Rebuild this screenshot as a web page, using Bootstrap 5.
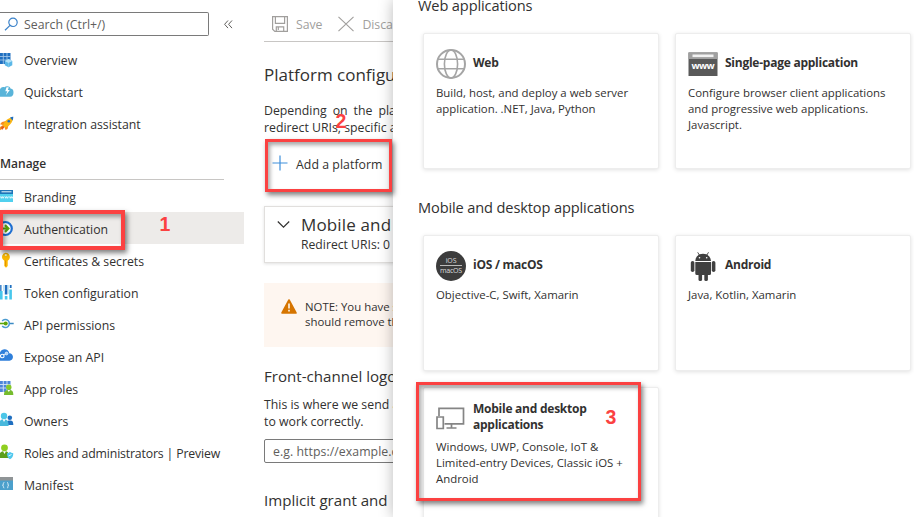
<!DOCTYPE html>
<html lang="en">
<head>
<meta charset="utf-8">
<title>Authentication</title>
<link href="https://cdn.jsdelivr.net/npm/bootstrap@5.3.0/dist/css/bootstrap.min.css" rel="stylesheet">
<style>
body{font-family:"Open Sans","Noto Sans",sans-serif;font-size:12.3px;line-height:16px;color:#323130;background:#fff;width:914px;height:517px}
svg{display:block;flex:none;overflow:visible}
.side{width:244px;flex:none}
.search-row{padding-top:12px;height:44px}
.search-box{width:209px;height:24px;border:1px solid #7a7a7a;border-left:0;border-radius:0 2px 2px 0;color:#605e5c;padding-left:4px;gap:5px}
.search-box span{padding-top:1px}
.collapse-icon{margin-left:15px}
.menu-item{height:32px;gap:10px;letter-spacing:-.02px}
.menu-item span{padding-top:2px}
.group-title ~ .menu-item span{padding-top:4px}
.menu-item.long{letter-spacing:-.16px}
.menu-item.current{background:#edebe9}
.group-title{height:40px;width:224px;border-bottom:1px solid #c8c6c4;font-weight:600;padding-top:16px;font-size:12px}
.main{width:149px;padding-left:20px;flex:none}
.tools{height:42px;padding:6px 0 0 8px;border-bottom:1px solid #c8c6c4;color:#a19f9d;gap:8px}
.tools span{padding-top:2px;letter-spacing:-.05px}
.h-big{font-size:17px;line-height:24px}
.page-title{padding-top:21px}
.h-mid{font-size:14.6px;line-height:20px;letter-spacing:-.13px}
.para{line-height:17px}
.intro{margin-top:15px}
.spread{word-spacing:2.8px}
.add{height:49px;padding:4px 0 0 8px;gap:8px;margin-top:2px;letter-spacing:.05px}
.config{height:57px;border:1px solid #e1dfdd;box-shadow:0 1px 3px rgba(0,0,0,.12);padding:6px 0 0 12px;gap:11px;margin-top:19px;width:200px}
.config .h-big{letter-spacing:.15px}
.config-sub{line-height:16px;font-size:12.2px}
.note{margin-top:20px;height:64px;width:200px;background:#fef6f0;padding:16px 0 0 17px;gap:8px;font-size:11.4px;line-height:15px}
.front-title{margin-top:19px}
.front-text{margin-top:10px}
.url{margin-top:9px;height:24px;width:200px;border:1px solid #7a7a7a;border-radius:2px;padding:2px 0 0 8px;color:#605e5c;letter-spacing:.05px}
.implicit-title{margin-top:27px}
.front-title,.implicit-title{font-size:15.1px;letter-spacing:0}
.panel{background:#fff;box-shadow:0 0 14px rgba(0,0,0,.28);padding-left:25px}
.web-title{margin-top:-5px}
.web-tiles{margin-top:18px}
.mobile-title{margin:28px 0 18px}
.tiles{display:grid;grid-template-columns:236px 236px;gap:16px;padding-left:5px}
.tile{height:136px;border:1px solid #ededed;border-radius:2px;box-shadow:0 1px 4px rgba(0,0,0,.12);padding:14px 12px 0 12px;font-size:11.42px;background:#fff}
.tile-head{height:32px;gap:7px;font-weight:700;font-size:12px;letter-spacing:-.25px;margin-bottom:5px}
.tile-head span{margin-top:-2px}
.mark-box{position:absolute;border:4px solid #fb4141;box-shadow:2px 3px 5px rgba(0,0,0,.5),inset 2px 3px 4px rgba(0,0,0,.35)}
.mark-num{position:absolute;font:bold 19.5px/20px "Liberation Sans",sans-serif;color:#fb4141;width:12px;text-align:center}
.mb1{left:-1px;top:210px;width:126px;height:40px}
.mb2{left:265px;top:139px;width:127px;height:53px;border-width:3px}
.mb3{left:416px;top:382px;width:225px;height:119px;border-width:3px}
.mn1{left:159px;top:214px}.mn2{left:335px;top:111px}.mn3{left:605px;top:407px}
</style>
<script src="https://cdn.jsdelivr.net/npm/bootstrap@5.3.0/dist/js/bootstrap.bundle.min.js"></script>
</head>
<body class="position-relative overflow-hidden text-nowrap">
<div class="d-flex h-100">
<nav class="side">
  <div class="search-row d-flex">
    <div class="search-box d-flex align-items-center">
      <svg width="15" height="15" viewBox="0 0 15 15" fill="none" stroke="#3b82c9" stroke-width="1.2"><circle cx="9" cy="5.3" r="4.2"/><path d="M6 8.4L1 13.2"/></svg>
      <span>Search (Ctrl+/)</span>
    </div>
    <svg class="collapse-icon mt-2" width="9" height="9" viewBox="0 0 9 9" fill="none" stroke="#605e5c"><path d="M4 .5L.6 4.3 4 8.1M8 .5L4.6 4.3 8 8.1"/></svg>
  </div>
  <div class="menu-item d-flex align-items-center"><svg width="14" height="16" viewBox="0 0 14 16"><path fill="#1f6fc0" d="M0 1h10.500v11H0z"/><path d="M0 4.500h10.500M0 8h10.500M3.300 1v11M7 1v11" stroke="#a9cbea" stroke-width=".8"/><path d="M8.500 7L12.300 9v4.200L8.500 15.300 4.800 13.200V9z" fill="#5bb8e8"/><path d="M8.500 7L12.300 9 8.500 11 4.800 9z" fill="#b5e2f7"/><path d="M8.500 11v4.300" stroke="#8fd0ef" stroke-width=".6"/></svg><span>Overview</span></div>
  <div class="menu-item d-flex align-items-center"><svg width="14" height="16" viewBox="0 0 14 16"><path fill="#59b4d9" d="M0 5.500C.5 3.500 2.500 2.300 4.500 3.300 6 1.500 10 2 10.500 4.500c2.500.3 3 2 3 4C13.500 11 12.500 12.800 10 12.800H0z"/><path fill="#fff" d="M6.500 3.200L5.300 7.300h2l-1.500 4 4-5.200H7.800l1-2.900z"/></svg><span>Quickstart</span></div>
  <div class="menu-item d-flex align-items-center"><svg width="14" height="16" viewBox="0 0 14 16"><path d="M2 6L6 5 8.500 9 7.500 13 5.500 14 4.500 11 1 13.500 0 14.200V11L3 9 0 8.300z" fill="#f78d1e"/><path d="M3 9.500C4 6 7 2.500 11.500 1.500L13 3.500C11.500 8 8.500 10.500 5.500 11.800z" fill="#fdb713"/><path d="M10 1.400C11.500.7 12.500.6 13.300.7c0 1-.2 2.500-.8 3.700z" fill="#1f6fc0"/><circle cx="8.800" cy="5.300" r="1.300" fill="#1f6fc0"/><path d="M1 11.500l2-1.500 1.300 1.500L2 14z" fill="#e3591b"/></svg><span>Integration assistant</span></div>
  <div class="group-title">Manage</div>
  <div class="menu-item d-flex align-items-center"><svg width="14" height="16" viewBox="0 0 14 16"><path fill="#50d0ee" d="M0 2h13v12H0z"/><path fill="#1f75b8" d="M0 2h13v4H0z"/><path fill="#e8f5fb" d="M1.500 3.300h10v1H1.500z"/><path d="M.5 8.500l.8 1.800.9-1.800.9 1.800.9-1.800m1 0l.8 1.800.9-1.800.9 1.800.9-1.800m1 0l.8 1.800.9-1.800.9 1.800.9-1.800" fill="none" stroke="#fff" stroke-width=".8"/></svg><span>Branding</span></div>
  <div class="menu-item current d-flex align-items-center"><svg width="14" height="16" viewBox="0 0 14 16"><circle cx="5.300" cy="8.500" r="6.500" fill="#fff" stroke="#1f6fd0" stroke-width="2.200"/><path d="M0 8.500h8M5 5.100L8.400 8.500 5 11.900" fill="none" stroke="#5ea50a" stroke-width="2.200"/></svg><span>Authentication</span></div>
  <div class="menu-item d-flex align-items-center"><svg width="14" height="16" viewBox="0 0 14 16"><path d="M5.500.8a4.300 4.300 0 0 1 2.200 8V14L6 15.800 4.300 14V8.800A4.300 4.300 0 0 1 5.500.8z" fill="#fbb800"/><circle cx="5.800" cy="3" r="1.100" fill="#fff3c0"/><path d="M5.500 8.500v5.500" stroke="#e18a00" stroke-width=".8"/></svg><span>Certificates &amp; secrets</span></div>
  <div class="menu-item d-flex align-items-center"><svg width="14" height="16" viewBox="0 0 14 16"><path fill="#1f6fc0" d="M.2 1h1.300v8H.2zM4.800 1h2.600v9.500H4.800zM9.800 1h1.800v3H9.800z"/><path fill="#48c7ec" d="M0 7h2.600v8.500H0zM4.800 12h2.600v3.500H4.800zM9.300 5.500h2.600v10H9.300z"/><path d="M3.600 1v6M8.400 1v9" stroke="#9bd9f2" stroke-width=".7"/></svg><span>Token configuration</span></div>
  <div class="menu-item d-flex align-items-center"><svg width="14" height="16" viewBox="0 0 14 16"><path d="M2.200 5A4 4 0 1 1 2.200 10" fill="none" stroke="#4b9bd0" stroke-width="1.500"/><path d="M9.700 7.500h4" stroke="#3b8bc4" stroke-width="1.500"/><path d="M0 7.500h5" stroke="#5ea50a" stroke-width="1.600"/><circle cx="5.700" cy="7.500" r="2" fill="#5ea50a"/></svg><span>API permissions</span></div>
  <div class="menu-item d-flex align-items-center"><svg width="14" height="16" viewBox="0 0 14 16"><path fill="#2f7fda" d="M0 4.500C2-.3 8.500.5 9.300 5.300c5 .2 4.800 7.200.2 7.500H0z"/><circle cx="2.300" cy="8" r="1.800" fill="none" stroke="#fff" stroke-width="1.100"/><circle cx="6.500" cy="5.500" r="1.400" fill="#a7cdf5" stroke="#e6f2ff" stroke-width=".8"/><path d="M3.500 7l2-1" stroke="#fff" stroke-width=".7"/></svg><span>Expose an API</span></div>
  <div class="menu-item d-flex align-items-center"><svg width="14" height="16" viewBox="0 0 14 16"><path fill="#4d86d9" d="M0 1h10.500v11H0z"/><path d="M0 4.500h10.500M0 8h10.500M3.300 1v11M7 1v11" stroke="#d6e4f7" stroke-width=".9"/><circle cx="8.800" cy="7.300" r="2.700" fill="#86c928"/><path d="M4 15c0-4 1.500-5 4.800-5s4.500 1.200 4.500 5z" fill="#76bc2d"/><path d="M7.500 10h2.600l-1.300 2z" fill="#fff"/></svg><span>App roles</span></div>
  <div class="menu-item d-flex align-items-center"><svg width="14" height="16" viewBox="0 0 14 16"><circle cx="9.800" cy="5.800" r="2.300" fill="#1f6fc0"/><path d="M6 13c0-3.500 1-4.600 3.800-4.600s3.500 1.300 3.500 4.600z" fill="#1f6fc0"/><circle cx="4" cy="4" r="3.200" fill="#4cc6e8"/><path d="M0 14V9c1-1.500 2.500-1.700 4-1.700 3.300 0 4.600 2 4.600 6.700z" fill="#48b8dc"/><path d="M2.600 7.300h3L4 10z" fill="#fff"/></svg><span>Owners</span></div>
  <div class="menu-item long d-flex align-items-center"><svg width="14" height="16" viewBox="0 0 14 16"><circle cx="4.500" cy="3.800" r="3.400" fill="#8fcf20"/><path d="M0 14V9c1-1.500 2.700-1.800 4.500-1.800C8 7.200 9 9 9.300 14z" fill="#5c9e1c"/><path d="M3 7.200h3L4.500 10z" fill="#fff"/><path d="M7 9.300C8.500 9 9.300 8.500 10 8c.8.500 1.700 1 3.300 1.300 0 3-1 4.700-3.300 6-2.200-1.300-3-3-3-6z" fill="#50c8ee"/><path d="M8.500 12l3-1.500" stroke="#e0f6fd"/></svg><span>Roles and administrators | Preview</span></div>
  <div class="menu-item d-flex align-items-center"><svg width="14" height="16" viewBox="0 0 14 16"><path fill="#4ba0cc" d="M0 2h13v12H0z"/><path fill="#8f9496" d="M0 1h13v3.500H0z"/><path d="M4.300 6.500c-1.200 0-.9 1-.9 1.700S3 9 2.500 9.200c.5.200.9.200.9 1s-.3 1.700.9 1.700M7 6.500c1.200 0 .9 1 .9 1.700s.4.800.9 1c-.5.200-.9.200-.9 1s.3 1.700-.9 1.700" fill="none" stroke="#e6f4fb" stroke-width=".9"/></svg><span>Manifest</span></div>
</nav>
<main class="main">
  <div class="tools d-flex align-items-center">
    <svg width="16" height="16" viewBox="0 0 16 16" fill="none" stroke="#a19f9d" stroke-width="1.200"><path d="M.6.600h14.800v14.800H2.800L.6 13.200zM3.400.600v6.800h9.200V.600M4.300 15.400v-4.600h7.400v4.600M6.300 11v3"/></svg>
    <span>Save</span>
    <svg class="ms-2" width="16" height="16" viewBox="0 0 17 16" fill="none" stroke="#a19f9d" stroke-width="1.200"><path d="M.5.500l16 15M16.500.500l-16 15"/></svg>
    <span>Discard</span>
  </div>
  <div class="h-big page-title">Platform configurations</div>
  <div class="para intro"><div class="spread">Depending on the platform</div><div>redirect URIs, specific authentication</div></div>
  <div class="add d-flex align-items-center"><svg class="mb-1" width="16" height="16" viewBox="0 0 16 16" stroke="#3f8fdb" stroke-width="1.200"><path d="M8 .5v15M.5 8h15"/></svg><span>Add a platform</span></div>
  <div class="config d-flex">
    <svg class="mt-1" width="13" height="16" viewBox="0 0 13 16" fill="none" stroke="#323130" stroke-width="1.200"><path d="M.8 4.500l5.700 5.700 5.700-5.700"/></svg>
    <div><div class="h-big">Mobile and desktop</div><div class="config-sub">Redirect URIs: 0</div></div>
  </div>
  <div class="note d-flex">
    <svg width="16" height="15" viewBox="0 0 16 15"><path d="M8 1l7 13H1z" fill="#d67500" stroke="#d67500" stroke-width="1.600" stroke-linejoin="round"/><path d="M8 4.500v5M8 10.800v1.700" stroke="#fff" stroke-width="1.500"/></svg>
    <div><div>NOTE: You have some</div><div>should remove them</div></div>
  </div>
  <div class="h-mid front-title">Front-channel logout URL</div>
  <div class="para front-text"><div>This is where we send a</div><div>to work correctly.</div></div>
  <div class="url d-flex align-items-center">e.g. https://example.com/logout</div>
  <div class="h-mid implicit-title">Implicit grant and&nbsp; hybrid</div>
</main>
<aside class="panel flex-grow-1 position-relative">
  <div class="h-mid web-title">Web applications</div>
  <div class="tiles web-tiles">
    <div class="tile">
      <div class="tile-head d-flex align-items-center"><svg width="30" height="30" viewBox="0 0 30 30" fill="none" stroke="#a5a5a5" stroke-width="1.600"><circle cx="15" cy="15" r="14" stroke-width="2"/><ellipse cx="15" cy="15" rx="6.600" ry="14"/><path d="M2 10.300h26M2 19.700h26"/></svg><span>Web</span></div>
      Build, host, and deploy a web server<br>application. .NET, Java, Python
    </div>
    <div class="tile">
      <div class="tile-head d-flex align-items-center"><svg width="30" height="30" viewBox="0 0 30 30"><path fill="#595959" d="M.5 3.500h29v23.500H.5z"/><path fill="#a0a0a0" d="M.5 3.500h29V10H.5z"/><path fill="#f2f2f2" d="M4.500 5.500h21v2.600h-21z"/><text x="15" y="20" fill="#fff" font-size="9.500" font-weight="700" text-anchor="middle" textLength="23">www</text></svg><span>Single-page application</span></div>
      Configure browser client applications<br>and progressive web applications.<br>Javascript.
    </div>
  </div>
  <div class="h-mid mobile-title">Mobile and desktop applications</div>
  <div class="tiles">
    <div class="tile">
      <div class="tile-head d-flex align-items-center"><svg width="30" height="30" viewBox="0 0 30 30"><circle cx="15" cy="15" r="15" fill="#3c3c3c"/><path d="M4 14.500h22" stroke="#bbb"/><g fill="#ddd" font-size="7" font-weight="400" text-anchor="middle"><text x="15" y="12.200" textLength="10.500">iOS</text><text x="15" y="22" textLength="22" lengthAdjust="spacingAndGlyphs">macOS</text></g></svg><span>iOS / macOS</span></div>
      Objective-C, Swift, Xamarin
    </div>
    <div class="tile">
      <div class="tile-head d-flex align-items-center"><svg width="30" height="30" viewBox="0 0 30 30"><g fill="#404040"><path d="M7.300 10C7.500 5.500 10.500 2.700 15 2.700S22.700 5.500 23 10zM7.300 11H23v11.500a1.500 1.500 0 0 1-1.500 1.500H8.800a1.500 1.500 0 0 1-1.500-1.500z"/><rect x="2.800" y="10" width="3.600" height="11" rx="1.800"/><rect x="23.800" y="10" width="3.600" height="11" rx="1.800"/><rect x="10.500" y="21" width="3.600" height="9" rx="1.600"/><rect x="16.300" y="21" width="3.600" height="9" rx="1.600"/></g><path d="M11.300 4L9.700 1.300M18.900 4l1.600-2.700" stroke="#404040" stroke-width=".9"/><circle cx="11.500" cy="6.800" r=".8" fill="#fff"/><circle cx="18.700" cy="6.800" r=".8" fill="#fff"/></svg><span>Android</span></div>
      Java, Kotlin, Xamarin
    </div>
    <div class="tile">
      <div class="tile-head d-flex align-items-center"><svg width="30" height="30" viewBox="0 0 30 30" fill="none" stroke="#858585" stroke-width="1.700"><path d="M3 13V5.300h24.500v15.500H8.500M15.500 21v4.500M10.500 25h10"/><path d="M1 14h6.300v11.500H1z"/></svg><span>Mobile and desktop<br>applications</span></div>
      Windows, UWP, Console, IoT &amp;<br>Limited-entry Devices, Classic iOS +<br>Android
    </div>
  </div>
</aside>
</div>
<div class="mark-box mb1"></div><div class="mark-num mn1">1</div>
<div class="mark-box mb2"></div><div class="mark-num mn2">2</div>
<div class="mark-box mb3"></div><div class="mark-num mn3">3</div>
</body>
</html>
